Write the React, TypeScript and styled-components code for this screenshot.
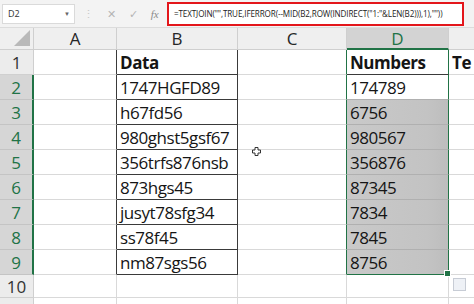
import React from "react";
import styled, { createGlobalStyle } from "styled-components";

const Global = createGlobalStyle`
  body {
    margin: 0;
    background: #ffffff;
    font-family: "Open Sans", "Liberation Sans", sans-serif;
    overflow: hidden;
  }
`;

const GREEN = "#217346";
const GRID = "#d9d9d9";

const Frame = styled.div`
  width: 474px;
  height: 304px;
  overflow: hidden;
  display: flex;
  flex-direction: column;
  background: #fff;
`;

const Toolbar = styled.div`
  height: 28px;
  flex: none;
  display: flex;
  align-items: center;
  background: #f3f3f3;
  border-bottom: 1px solid #dcdcdc;
  box-sizing: border-box;
  padding-left: 2px;
`;

const NameBox = styled.div`
  width: 73px;
  height: 20px;
  box-sizing: border-box;
  background: #fff;
  border: 1px solid #dadada;
  display: flex;
  align-items: center;
  justify-content: space-between;
  padding: 0 4px 0 5px;
  font-size: 9px;
  color: #333;
`;

const Caret = styled.span`
  font-size: 6px;
  color: #666;
`;

const Tools = styled.div`
  width: 88px;
  display: flex;
  align-items: center;
  justify-content: space-around;
  color: #b5b5b5;
  font-size: 11px;
  padding: 0 2px;
`;

const Fx = styled.span`
  font-family: "Liberation Serif", serif;
  font-style: italic;
  color: #8a8a8a;
  font-size: 11px;
`;

const Formula = styled.div`
  width: 297px;
  height: 24px;
  box-sizing: border-box;
  border: 2px solid #e3161b;
  background: #fff;
  display: flex;
  align-items: center;
  padding-left: 5px;
  font-size: 8.1px;
  letter-spacing: -0.12px;
  color: #222;
  white-space: nowrap;
  overflow: hidden;
`;

const Sheet = styled.div`
  display: grid;
  grid-template-columns: 34px 83px 121px 109px 102px 40px;
  grid-auto-rows: 25px;
  grid-template-rows: 22px;
  grid-auto-rows: 25px 25px 25px 25px 25px 25px 25px 25px 25px 23px 25px;
`;

const Corner = styled.div`
  background: #efefef;
  border-right: 1px solid #cfcfcf;
  border-bottom: 1px solid #cfcfcf;
  position: relative;
  &::after {
    content: "";
    position: absolute;
    right: 3px;
    bottom: 3px;
    border-style: solid;
    border-width: 0 0 16px 16px;
    border-color: transparent transparent #b9b9b9 transparent;
  }
`;

const ColHead = styled.div<{ $sel?: boolean }>`
  background: ${(p) => (p.$sel ? "#d3d3d3" : "#efefef")};
  color: ${(p) => (p.$sel ? GREEN : "#262626")};
  border-right: 1px solid #cfcfcf;
  border-bottom: ${(p) => (p.$sel ? `2px solid ${GREEN}` : "1px solid #cfcfcf")};
  box-sizing: border-box;
  display: flex;
  align-items: center;
  justify-content: center;
  font-size: 17px;
  line-height: 1;
`;

const RowHead = styled.div<{ $sel?: boolean }>`
  background: ${(p) => (p.$sel ? "#d6d6d6" : "#ececec")};
  color: ${(p) => (p.$sel ? GREEN : "#333")};
  border-right: ${(p) => (p.$sel ? `2px solid ${GREEN}` : "1px solid #cfcfcf")};
  border-bottom: 1px solid ${(p) => (p.$sel ? "#c4c4c4" : "#d0d0d0")};
  box-sizing: border-box;
  display: flex;
  align-items: center;
  justify-content: center;
  font-size: 17px;
`;

const Cell = styled.div<{
  $r: string;
  $b: string;
  $fill?: boolean;
  $bold?: boolean;
}>`
  position: relative;
  box-sizing: border-box;
  border-right: 1px solid ${(p) => p.$r};
  border-bottom: 1px solid ${(p) => p.$b};
  background: ${(p) =>
    p.$fill ? "linear-gradient(90deg, #c9c9c9, #c3c3c3 80%, #bdbdbd)" : "#fff"};
  display: flex;
  align-items: center;
  padding-left: 3px;
  font-size: 17px;
  font-weight: ${(p) => (p.$bold ? 700 : 400)};
  color: #151515;
  white-space: nowrap;
  overflow: visible;
  letter-spacing: -0.45px;
`;

const Handle = styled.div`
  position: absolute;
  right: -3px;
  bottom: -3px;
  width: 5px;
  height: 5px;
  background: ${GREEN};
  border: 1px solid #fff;
  z-index: 2;
`;

const PasteIcon = styled.div`
  position: absolute;
  left: 4px;
  top: 3px;
  width: 11px;
  height: 11px;
  background: #eef1f6;
  border: 1px solid #c7ccd5;
  z-index: 2;
`;

const Cursor = styled.svg`
  position: absolute;
  left: 14px;
  top: -3px;
  z-index: 3;
`;

const data = [
  "Data",
  "1747HGFD89",
  "h67fd56",
  "980ghst5gsf67",
  "356trfs876nsb",
  "873hgs45",
  "jusyt78sfg34",
  "ss78f45",
  "nm87sgs56",
];

const nums = [
  "Numbers",
  "174789",
  "6756",
  "980567",
  "356876",
  "87345",
  "7834",
  "7845",
  "8756",
];

const App = () => {
  const rows = Array.from({ length: 11 }, (_, i) => i + 1);
  return (
    <React.Fragment>
      <Global />
      <Frame>
        <Toolbar>
          <NameBox>
            D2 <Caret>▼</Caret>
          </NameBox>
          <Tools>
            <span style={{ color: "#c8c8c8" }}>⋮</span>
            <span>✕</span>
            <span>✓</span>
            <Fx>fx</Fx>
          </Tools>
          <Formula>
            =TEXTJOIN("",TRUE,IFERROR(--MID(B2,ROW(INDIRECT("1:"&amp;LEN(B2))),1),""))
          </Formula>
        </Toolbar>
        <Sheet>
          <Corner />
          <ColHead>A</ColHead>
          <ColHead>B</ColHead>
          <ColHead>C</ColHead>
          <ColHead $sel>D</ColHead>
          <ColHead />
          {rows.map((r) => {
            const inB = r <= 9;
            const sel = r >= 2 && r <= 9;
            return (
              <React.Fragment key={r}>
                <RowHead $sel={sel}>{r <= 10 ? r : ""}</RowHead>
                <Cell $r={inB ? "#3a3a3a" : GRID} $b={GRID} />
                <Cell
                  $r={inB ? "#3a3a3a" : GRID}
                  $b={inB ? "#3a3a3a" : GRID}
                  $bold={r === 1}
                >
                  {inB ? data[r - 1] : ""}
                </Cell>
                <Cell $r={inB ? GREEN : GRID} $b={GRID}>
                  {r === 5 && (
                    <Cursor width="9" height="9" viewBox="0 0 9 9">
                      <path
                        d="M3 .5h3v2.5h2.5v3H6v2.5H3V6H.5V3H3z"
                        fill="#fff"
                        stroke="#333"
                        strokeWidth="1"
                      />
                    </Cursor>
                  )}
                </Cell>
                <Cell
                  $r={inB ? GREEN : GRID}
                  $b={r === 9 ? GREEN : r === 1 ? "#3a3a3a" : inB ? "#b0b0b0" : GRID}
                  $fill={r >= 3 && r <= 9}
                  $bold={r === 1}
                >
                  {inB ? nums[r - 1] : ""}
                  {r === 9 && <Handle />}
                </Cell>
                <Cell $r={GRID} $b={GRID} $bold={r === 1}>
                  {r === 1 ? "Te" : ""}
                  {r === 10 && <PasteIcon />}
                </Cell>
              </React.Fragment>
            );
          })}
        </Sheet>
      </Frame>
    </React.Fragment>
  );
};

export default App;
